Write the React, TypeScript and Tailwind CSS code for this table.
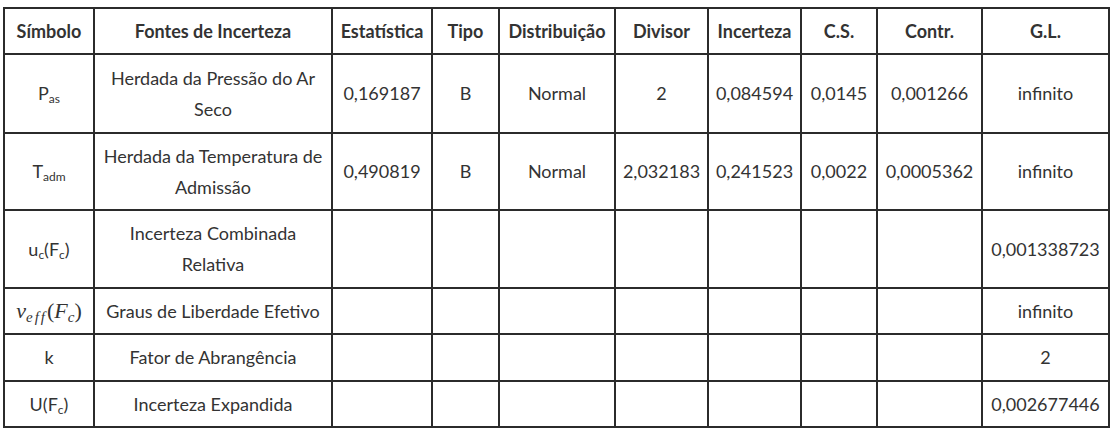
import React from 'react';

type Row = {
  sym: React.ReactNode;
  fonte: React.ReactNode;
  cells: string[];
  h: string;
};

const Sub = ({ children }: { children: React.ReactNode }) => (
  <sub className="text-[12px] relative top-[3px] align-baseline">{children}</sub>
);

const headers = ['Símbolo', 'Fontes de Incerteza', 'Estatística', 'Tipo', 'Distribuição', 'Divisor', 'Incerteza', 'C.S.', 'Contr.', 'G.L.'];

const widths = [90, 238, 100, 67, 116, 93, 93, 76, 105, 127];

const rows: Row[] = [
  {
    sym: <>P<Sub>as</Sub></>,
    fonte: <>Herdada da Pressão do Ar<br />Seco</>,
    cells: ['0,169187', 'B', 'Normal', '2', '0,084594', '0,0145', '0,001266', 'infinito'],
    h: 'h-[79px]',
  },
  {
    sym: <>T<Sub>adm</Sub></>,
    fonte: <>Herdada da Temperatura de<br />Admissão</>,
    cells: ['0,490819', 'B', 'Normal', '2,032183', '0,241523', '0,0022', '0,0005362', 'infinito'],
    h: 'h-[77px]',
  },
  {
    sym: <>u<Sub>c</Sub>(F<Sub>c</Sub>)</>,
    fonte: <>Incerteza Combinada<br />Relativa</>,
    cells: ['', '', '', '', '', '', '', '0,001338723'],
    h: 'h-[78px]',
  },
  {
    sym: (
      <span className="font-['Liberation_Serif',serif] italic text-[22px]">
        ν<sub className="text-[15px] tracking-[2px] relative top-[4px] align-baseline">eff</sub>
        <span className="not-italic">(</span>F<sub className="text-[15px] relative top-[4px] align-baseline">c</sub>
        <span className="not-italic">)</span>
      </span>
    ),
    fonte: 'Graus de Liberdade Efetivo',
    cells: ['', '', '', '', '', '', '', 'infinito'],
    h: 'h-[46px]',
  },
  {
    sym: 'k',
    fonte: 'Fator de Abrangência',
    cells: ['', '', '', '', '', '', '', '2'],
    h: 'h-[47px]',
  },
  {
    sym: <>U(F<Sub>c</Sub>)</>,
    fonte: 'Incerteza Expandida',
    cells: ['', '', '', '', '', '', '', '0,002677446'],
    h: 'h-[46px]',
  },
];

export default function App() {
  return (
    <div className="w-[1113px] h-[433px] bg-white pt-[7px] pl-[3px] font-['Lato',sans-serif] text-[18px] text-[#333333]">
      <table className="table-fixed border-collapse w-[1105px] border-2 border-[#2b2b2b]">
        <colgroup>
          {widths.map((w, i) => (
            <col key={i} style={{ width: w }} />
          ))}
        </colgroup>
        <thead>
          <tr className="h-[46px]">
            {headers.map((h) => (
              <th key={h} className="border-2 border-[#2b2b2b] font-bold text-center leading-[30px] px-0 whitespace-nowrap">
                {h}
              </th>
            ))}
          </tr>
        </thead>
        <tbody>
          {rows.map((r, i) => (
            <tr key={i} className={r.h}>
              <td className="border-2 border-[#2b2b2b] text-center leading-[31px] whitespace-nowrap">{r.sym}</td>
              <td className="border-2 border-[#2b2b2b] text-center leading-[31px]">{r.fonte}</td>
              {r.cells.map((c, j) => (
                <td key={j} className="border-2 border-[#2b2b2b] text-center leading-[31px] whitespace-nowrap">
                  {c}
                </td>
              ))}
            </tr>
          ))}
        </tbody>
      </table>
    </div>
  );
}
